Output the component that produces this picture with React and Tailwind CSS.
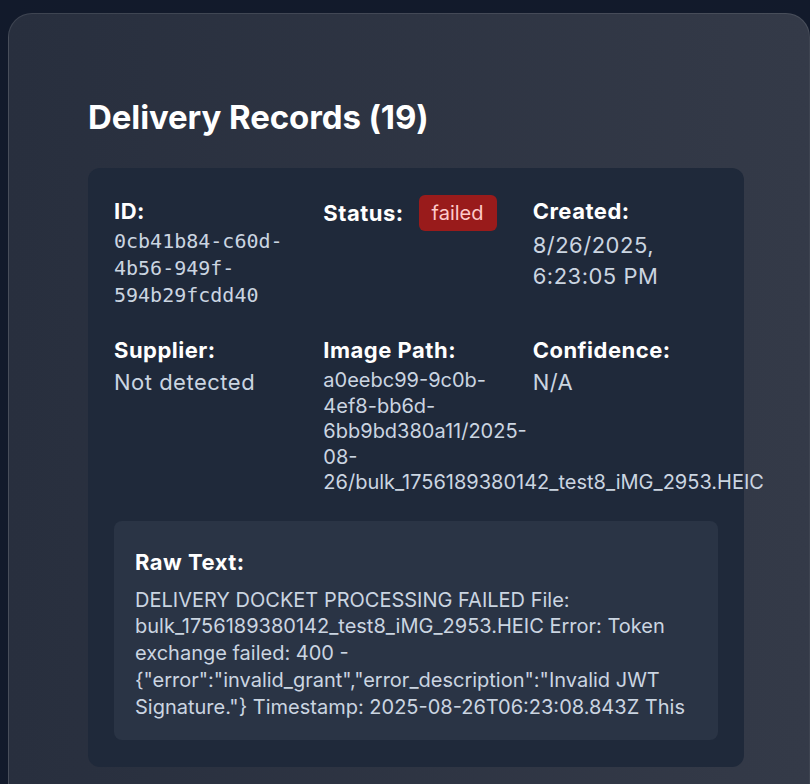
import React from 'react'

const Label = ({ children }) => (
  <span className="text-[22px] leading-[33px] font-bold tracking-[0.5px] text-white">{children}</span>
)

const Field = ({ label, children, badge }) => (
  <div className="flex flex-col">
    {badge ? (
      <div className="flex items-center gap-[15px]">
        <Label>{label}</Label>
        {badge}
      </div>
    ) : (
      <Label>{label}</Label>
    )}
    {children}
  </div>
)

export default function App() {
  return (
    <div className="min-h-screen w-full overflow-hidden bg-[#121a2b] pt-[13px] pl-[8px] font-['Inter','Liberation_Sans',sans-serif]">
      <div className="w-[802px] min-h-[800px] rounded-[24px] border border-white/10 bg-gradient-to-r from-[#282f3e] to-[#343a48] pl-[79px] pt-[83px]">
        <h1 className="text-[33px] leading-[40px] font-bold text-white tracking-[-0.1px]">
          Delivery Records (19)
        </h1>

        <div className="mt-[31px] w-[656px] rounded-[12px] bg-[#1f293a] px-[26px] pt-[27px] pb-[27px]">
          <div className="grid grid-cols-3 gap-x-6 gap-y-[25px]">
            <Field label="ID:">
              <span className="font-['DejaVu_Sans_Mono',monospace] text-[20px] leading-[27px] text-[#cbd5e1]">
                0cb41b84-c60d-
                <br />
                4b56-949f-
                <br />
                594b29fcdd40
              </span>
            </Field>

            <Field
              label="Status:"
              badge={
                <span className="flex h-[36px] items-center rounded-[6px] bg-[#991b1b] px-[13px] text-[20px] text-[#fecaca]">
                  failed
                </span>
              }
            />

            <Field label="Created:">
              <span className="mt-[2px] text-[22px] leading-[31px] tracking-[0.5px] text-[#cbd5e1]">
                8/26/2025,
                <br />
                6:23:05 PM
              </span>
            </Field>

            <Field label="Supplier:">
              <span className="text-[22px] leading-[31px] tracking-[0.5px] text-[#cbd5e1]">Not detected</span>
            </Field>

            <Field label="Image Path:">
              <span className="mt-[1px] text-[20px] leading-[25.5px] text-[#cbd5e1] whitespace-nowrap">
                a0eebc99-9c0b-
                <br />
                4ef8-bb6d-
                <br />
                6bb9bd380a11/2025-
                <br />
                08-
                <br />
                26/bulk_1756189380142_test8_iMG_2953.HEIC
              </span>
            </Field>

            <Field label="Confidence:">
              <span className="text-[22px] leading-[31px] tracking-[0.5px] text-[#cbd5e1]">N/A</span>
            </Field>
          </div>

          <div className="mt-[25px] rounded-[8px] bg-[#2a3445] px-[21px] pt-[25px] pb-[20px]">
            <Label>Raw Text:</Label>
            <p className="mt-[8px] text-[20px] leading-[26.75px] text-[#cbd5e1]">
              DELIVERY DOCKET PROCESSING FAILED File:
              <br />
              bulk_1756189380142_test8_iMG_2953.HEIC Error: Token
              <br />
              exchange failed: 400 -
              <br />
              {'{"error":"invalid_grant","error_description":"Invalid JWT'}
              <br />
              {'Signature."} Timestamp: 2025-08-26T06:23:08.843Z This'}
            </p>
          </div>
        </div>
      </div>
    </div>
  )
}
